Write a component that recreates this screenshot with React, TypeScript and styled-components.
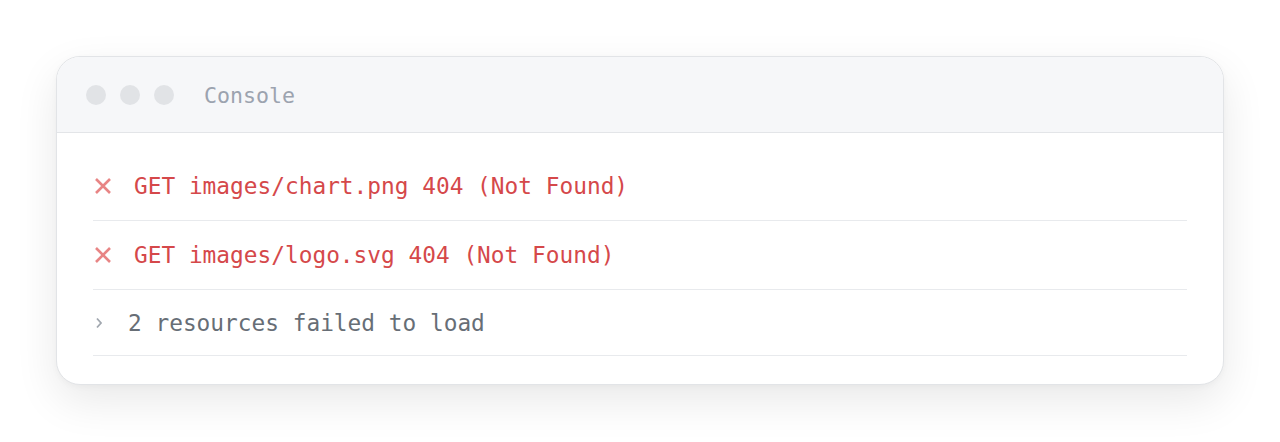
import React from "react";
import styled, { createGlobalStyle } from "styled-components";

const Global = createGlobalStyle`
  html, body { margin: 0; padding: 0; background: #ffffff; }
  body { font-family: "DejaVu Sans Mono", "Liberation Mono", monospace; }
`;

const Page = styled.div`
  padding: 56px 56px 58px;
  width: 1280px;
  box-sizing: border-box;
`;

const Card = styled.div`
  border: 1px solid #e2e4e7;
  border-radius: 24px;
  background: #ffffff;
  overflow: hidden;
  box-shadow: 0 16px 44px rgba(0, 0, 0, 0.09), 0 2px 6px rgba(0, 0, 0, 0.03);
`;

const Header = styled.div`
  height: 74px;
  display: flex;
  align-items: center;
  padding-left: 29px;
  padding-top: 1px;
  background: #f6f7f9;
  border-bottom: 1px solid #e3e5e8;
`;

const Dots = styled.div`
  display: flex;
  gap: 14px;
  margin-right: 30px;
`;

const Dot = styled.span`
  width: 20px;
  height: 20px;
  border-radius: 50%;
  background: #e1e3e6;
`;

const Title = styled.span`
  font-size: 21.6px;
  color: #9ca3af;
`;

const Body = styled.div`
  padding: 19px 36px 28px;
`;

const Row = styled.div<{ $h: number }>`
  height: ${(p) => p.$h}px;
  display: flex;
  align-items: center;
  border-bottom: 1px solid #e8eaed;
`;

const IconBox = styled.span<{ $w: number; $gap: number }>`
  width: ${(p) => p.$w}px;
  margin-right: ${(p) => p.$gap}px;
  display: flex;
  align-items: center;
  justify-content: center;
  flex: none;
`;

const Message = styled.span<{ $tone: "error" | "info" }>`
  font-size: 22.8px;
  white-space: pre;
  color: ${(p) => (p.$tone === "error" ? "#d5484a" : "#676e76")};
`;

const ErrorIcon = () => (
  <svg width="18" height="18" viewBox="0 0 18 18">
    <path d="M2 2 L16 16 M16 2 L2 16" stroke="#e88585" strokeWidth="2.6" strokeLinecap="butt" />
  </svg>
);

const Chevron = () => (
  <svg width="8" height="12" viewBox="0 0 8 12">
    <path d="M2 1.5 L6 6 L2 10.5" stroke="#a2a8b0" strokeWidth="1.8" fill="none" />
  </svg>
);

const errors = ["GET images/chart.png 404 (Not Found)", "GET images/logo.svg 404 (Not Found)"];

export default function App() {
  return (
    <>
      <Global />
      <Page>
        <Card>
          <Header>
            <Dots>
              <Dot />
              <Dot />
              <Dot />
            </Dots>
            <Title>Console</Title>
          </Header>
          <Body>
            {errors.map((e) => (
              <Row key={e} $h={68}>
                <IconBox $w={20} $gap={21}>
                  <ErrorIcon />
                </IconBox>
                <Message $tone="error">{e}</Message>
              </Row>
            ))}
            <Row $h={65}>
              <IconBox $w={12} $gap={23}>
                <Chevron />
              </IconBox>
              <Message $tone="info">2 resources failed to load</Message>
            </Row>
          </Body>
        </Card>
      </Page>
    </>
  );
}
